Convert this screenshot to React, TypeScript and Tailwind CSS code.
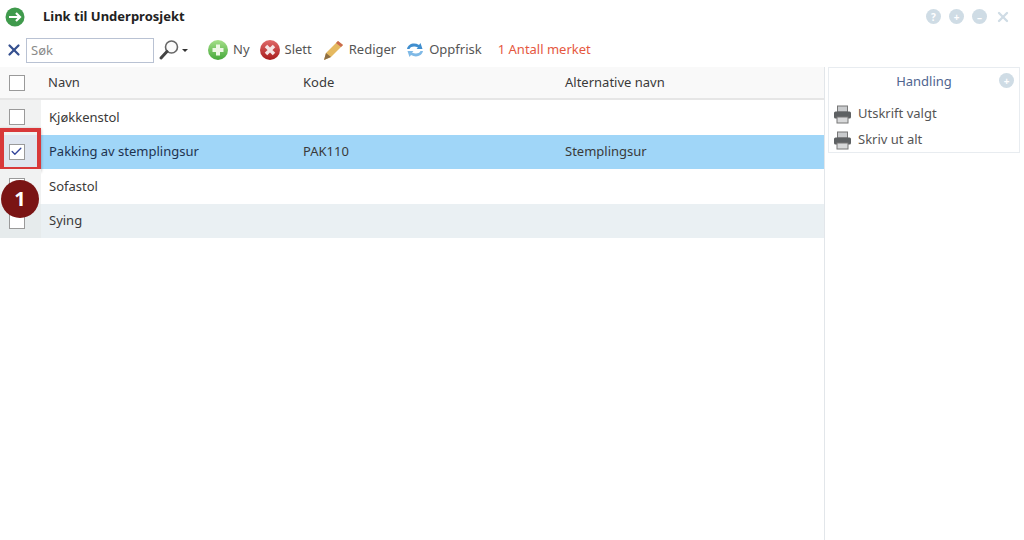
import React from "react"
import { Check, X } from "lucide-react"

const rows = [
  { name: "Kjøkkenstol", code: "", alt: "", bg: "bg-white", side: "bg-[#f1f2f2]" },
  { name: "Pakking av stemplingsur", code: "PAK110", alt: "Stemplingsur", bg: "bg-[#a0d6f8]", side: "bg-[#dfe5ef]", checked: true },
  { name: "Sofastol", code: "", alt: "", bg: "bg-white", side: "bg-[#f1f2f2]" },
  { name: "Sying", code: "", alt: "", bg: "bg-[#eaf0f3]", side: "bg-[#e6ebec]" },
]

const CircleIcon = ({ from, to, glyph }: { from: string; to: string; glyph: "plus" | "x" }) => (
  <svg width="22" height="22" viewBox="0 0 22 22">
    <defs>
      <linearGradient id={`g-${glyph}`} x1="0" y1="0" x2="0" y2="1">
        <stop offset="0" stopColor={from} />
        <stop offset="1" stopColor={to} />
      </linearGradient>
    </defs>
    <circle cx="11" cy="11" r="10" fill={`url(#g-${glyph})`} />
    {glyph === "plus" ? (
      <path d="M11 5.5v11M5.5 11h11" stroke="#eef8e6" strokeWidth="4" />
    ) : (
      <path d="M7 7l8 8M15 7l-8 8" stroke="#f6e6e6" strokeWidth="3.5" />
    )}
  </svg>
)

const SearchIcon = () => (
  <svg width="22" height="22" viewBox="0 0 22 22" fill="none">
    <circle cx="13.5" cy="8" r="6" stroke="#666" strokeWidth="1.6" fill="#fbfbfb" />
    <path d="M9 12.5L3 19" stroke="#444" strokeWidth="3" strokeLinecap="round" />
  </svg>
)

const PencilIcon = () => (
  <svg width="24" height="24" viewBox="0 0 24 24">
    <path d="M3 22l2-7L17 3l5 4L10 19z" fill="#e5b960" />
    <path d="M17 3l5 4-2 2-5-4z" fill="#c96a50" />
    <path d="M3 22l2-7 5 4z" fill="#8d6f45" />
  </svg>
)

const RefreshIcon = () => (
  <svg width="20" height="20" viewBox="0 0 20 20" fill="none">
    <path d="M2 9c1-5 7-7 12-4l1.500-2 2 6h-6l1.500-1.500C10 6 6 6 4.500 9z" fill="#3f8ecf" />
    <path d="M18 11c-1 5-7 7-12 4l-1.500 2-2-6h6L7 12.500c3 1.500 7 1.500 8.500-1.500z" fill="#7fb9e6" />
  </svg>
)

const PrinterIcon = () => (
  <svg width="19" height="19" viewBox="0 0 19 19">
    <rect x="4.500" y="1" width="10" height="6" fill="#c9cbcd" stroke="#777" />
    <rect x="1" y="6.500" width="17" height="7" rx="1.500" fill="#5e6163" />
    <rect x="4" y="12" width="11" height="6" fill="#d8d9da" stroke="#777" />
  </svg>
)

const WindowDot = ({ glyph }: { glyph: string }) => (
  <span className="flex h-[15px] w-[15px] items-center justify-center rounded-full bg-[#cfdce5] text-[10px] font-bold leading-none text-white">
    {glyph}
  </span>
)

const Box = ({ checked }: { checked?: boolean }) => (
  <span className="flex h-4 w-4 items-center justify-center border border-[#9a9a9a] bg-white">
    {checked && <Check size={13} strokeWidth={2.5} className="text-[#33459b]" />}
  </span>
)

const ToolButton = ({ icon, label }: { icon: React.ReactNode; label: string }) => (
  <div className="flex items-center gap-1 text-[#555]">
    {icon}
    <span>{label}</span>
  </div>
)

export default function App() {
  return (
    <div className="flex h-[540px] w-[1024px] flex-col overflow-hidden bg-white font-['Noto_Sans',sans-serif] text-[13px] text-[#3a3a3a]">
      <div className="flex h-[33px] shrink-0 items-center pl-[5px] pr-[13px]">
        <svg width="20" height="20" viewBox="0 0 20 20">
          <circle cx="10" cy="10" r="9.500" fill="#3f9a4c" />
          <path d="M4 10h11M11 6l4 4-4 4" stroke="#fff" strokeWidth="2.200" fill="none" />
        </svg>
        <span className="ml-[18px] text-[13px] font-bold text-[#222]">Link til Underprosjekt</span>
        <div className="ml-auto flex items-center gap-2">
          <WindowDot glyph="?" />
          <WindowDot glyph="+" />
          <WindowDot glyph="–" />
          <X size={16} strokeWidth={3.5} className="text-[#cfdce5]" />
        </div>
      </div>

      <div className="flex h-[34px] shrink-0 items-center pl-[5px]">
        <X size={18} strokeWidth={3} className="text-[#35508f]" />
        <input
          readOnly
          placeholder="Søk"
          className="ml-[3px] h-[25px] w-[128px] border border-[#b9c2d3] pl-1 text-[13px] placeholder:text-[#8a8a8a]"
        />
        <div className="ml-[4px] flex items-center">
          <SearchIcon />
          <span className="ml-[2px] h-0 w-0 border-x-[3px] border-t-[3px] border-x-transparent border-t-[#333]" />
        </div>
        <div className="ml-[19px] flex items-center gap-[9px]">
          <ToolButton icon={<CircleIcon from="#a6e08a" to="#45a83a" glyph="plus" />} label="Ny" />
          <ToolButton icon={<CircleIcon from="#e06a6a" to="#a81c1c" glyph="x" />} label="Slett" />
          <ToolButton icon={<PencilIcon />} label="Rediger" />
          <ToolButton icon={<RefreshIcon />} label="Oppfrisk" />
          <span className="ml-[7px] text-[#e5583f]">1 Antall merket</span>
        </div>
      </div>

      <div className="flex min-h-0 flex-1">
        <div className="w-[824px] shrink-0">
          <div className="flex h-[33px] items-center border-b-2 border-[#e6e6e6] bg-[#f9f9f9]">
            <div className="flex w-[41px] justify-center pr-2">
              <Box />
            </div>
            <div className="w-[262px] pl-[7px]">Navn</div>
            <div className="w-[262px]">Kode</div>
            <div>Alternative navn</div>
          </div>
          {rows.map((row) => (
            <div key={row.name} className={`flex h-[34.500px] items-center ${row.bg}`}>
              <div className={`relative flex h-full w-[41px] items-center justify-center pr-2 ${row.side}`}>
                <Box checked={row.checked} />
                {row.checked && (
                  <span className="absolute left-0 top-[-7px] h-[43px] w-[41px] border-[4px] border-[#d8383a] shadow-[0_1px_3px_rgba(0,0,0,0.3)]" />
                )}
              </div>
              <div className={`w-[262px] pl-2 ${row.checked ? "text-[#1e3350]" : ""}`}>{row.name}</div>
              <div className="w-[262px]">{row.code}</div>
              <div>{row.alt}</div>
            </div>
          ))}
        </div>

        <div className="flex-1 border-l border-[#e2e6ea] pl-[3px] pr-[4px]">
          <div className="h-[86px] border border-[#e8ecf0]">
            <div className="relative pt-[4px] text-center text-[13px] text-[#4f648f]">
              Handling
              <span className="absolute right-[5px] top-[5px]">
                <WindowDot glyph="+" />
              </span>
            </div>
            <div className="mt-[13px] flex flex-col gap-[7px] pl-[4px] text-[#555]">
              <div className="flex h-[19px] items-center gap-[6px]">
                <PrinterIcon />
                <span>Utskrift valgt</span>
              </div>
              <div className="flex h-[19px] items-center gap-[6px]">
                <PrinterIcon />
                <span>Skriv ut alt</span>
              </div>
            </div>
          </div>
        </div>
      </div>

      {/* callout badge over the first column */}
      <div className="absolute left-[1px] top-[180px] flex h-[38px] w-[38px] items-center justify-center rounded-full bg-[#7a1414] text-[20px] font-bold text-white">
        1
      </div>
    </div>
  )
}
